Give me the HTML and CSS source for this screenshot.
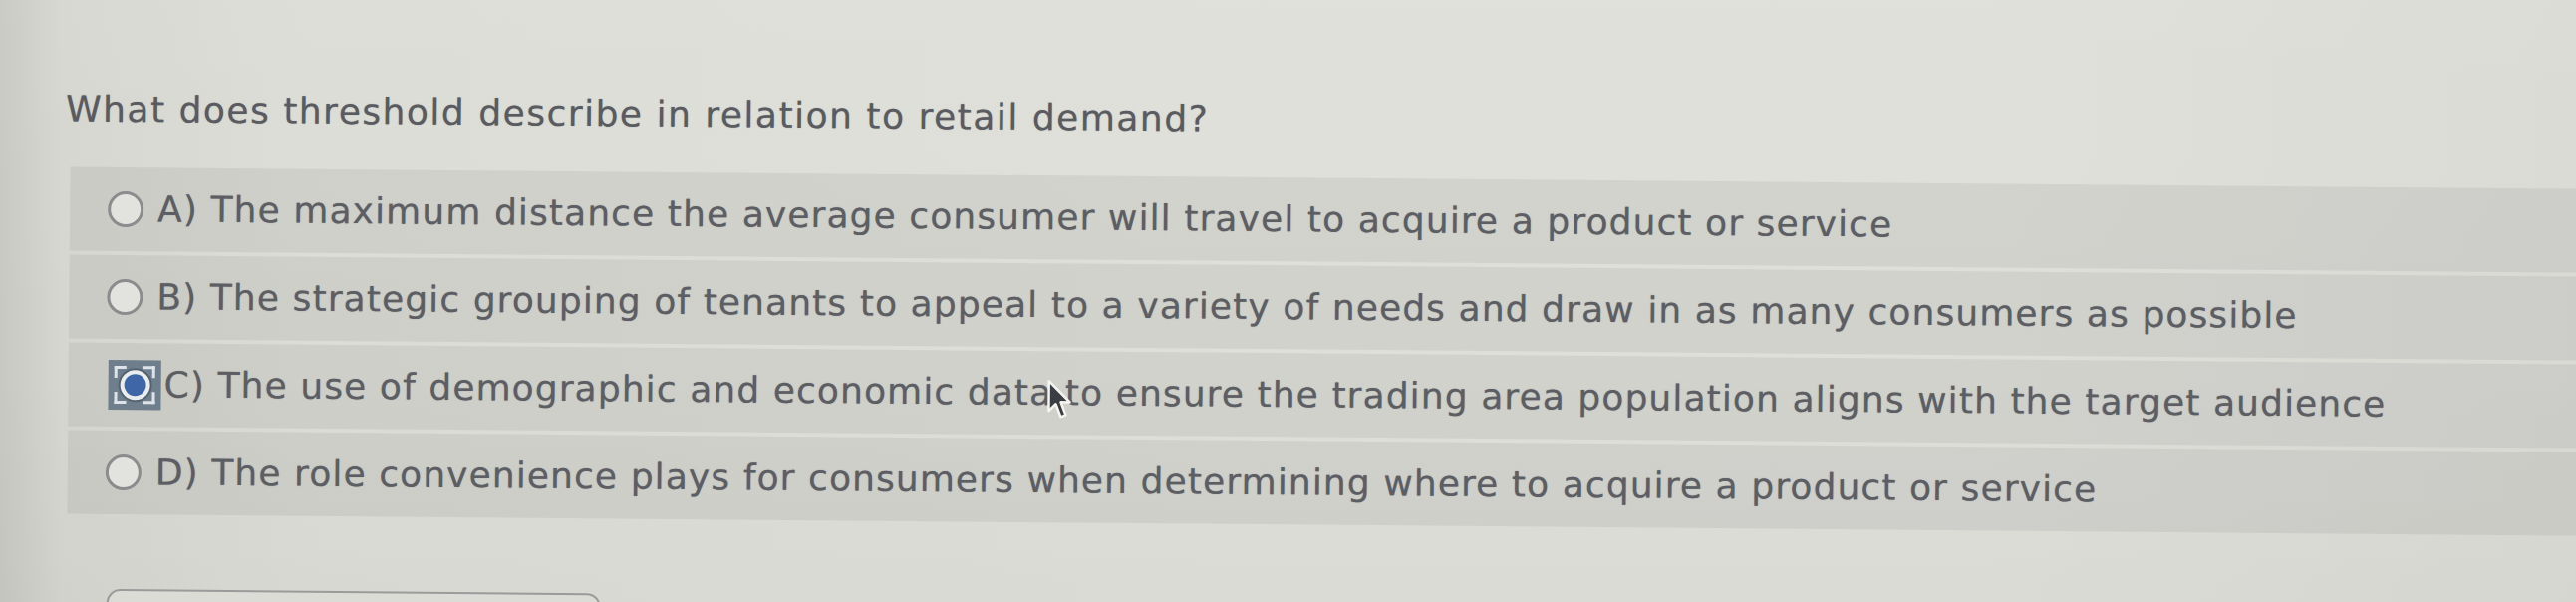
FILE: index.html
```html
<!DOCTYPE html>
<html lang="en">
<head>
<meta charset="utf-8">
<title>Question</title>
<link rel="stylesheet" href="styles.css">
</head>
<body>
<div class="page">
  <p class="question">What does threshold describe in relation to retail demand?</p>
  <ul class="options">
    <li class="option"><span class="radio"></span><span class="label">A) The maximum distance the average consumer will travel to acquire a product or service</span></li>
    <li class="option"><span class="radio"></span><span class="label">B) The strategic grouping of tenants to appeal to a variety of needs and draw in as many consumers as possible</span></li>
    <li class="option option-selected"><span class="radio-focus"><span class="corner tl"></span><span class="corner tr"></span><span class="corner bl"></span><span class="corner br"></span><span class="radio-on"></span></span><span class="label">C) The use of demographic and economic data to ensure the trading area population aligns with the target audience</span></li>
    <li class="option"><span class="radio"></span><span class="label">D) The role convenience plays for consumers when determining where to acquire a product or service</span></li>
  </ul>
  <div class="button"></div>
  <svg class="cursor" width="26" height="42" viewBox="0 0 26 42">
    <path d="M2 2 L2 32 L9 25 L14 38 L19 36 L14 23 L23 23 Z" fill="#3a3d42" stroke="#f4f4f0" stroke-width="2.5" stroke-linejoin="round"/>
  </svg>
</div>
</body>
</html>
```

FILE: styles.css
```css
html, body {
  margin: 0;
  padding: 0;
  width: 2585px;
  height: 604px;
  overflow: hidden;
}

body {
  background:
    linear-gradient(180deg, rgba(255,255,255,0.05) 0, rgba(255,255,255,0) 60%, rgba(0,0,0,0.02) 100%),
    linear-gradient(90deg, #c8c8c2 0, #d6d6d0 60px, #dcdcd6 300px, #dfdfd9 1200px, #dedfd9 2000px, #d9dad4 2585px);
  font-family: "DejaVu Sans", "Open Sans", sans-serif;
  color: #5d5e64;
}

.page {
  position: relative;
  box-sizing: border-box;
  width: 2600px;
  height: 604px;
  overflow: hidden;
  padding: 84px 0 0 67px;
  transform: rotate(0.5deg);
  transform-origin: 0 0;
}

.question {
  margin: 0;
  font-size: 36px;
  line-height: 50px;
  color: #5a5b60;
  letter-spacing: 1.5px;
  white-space: nowrap;
  text-shadow: 0 0 1px rgba(80, 80, 86, 0.6);
}

.options {
  list-style: none;
  margin: 33px 0 0 5px;
  padding: 0;
  display: flex;
  flex-direction: column;
  gap: 4px;
}

.option {
  height: 84px;
  display: flex;
  align-items: center;
  padding-left: 38px;
  background: rgba(60, 60, 50, 0.075);
  font-size: 36px;
  line-height: 50px;
}

.radio {
  width: 30px;
  height: 30px;
  border: 3px solid #8b8c8e;
  border-radius: 50%;
  background: #e2e2de;
  margin-right: 14px;
  flex: none;
}

.option-selected {
  padding-left: 40px;
}

.radio-focus {
  position: relative;
  width: 53px;
  height: 50px;
  margin-right: 3px;
  background: #6f7e8c;
  display: flex;
  align-items: center;
  justify-content: center;
  flex: none;
}

.radio-on {
  width: 22px;
  height: 22px;
  border-radius: 50%;
  background: #3f67a8;
  border: 4px solid #e9edf0;
  box-shadow: 0 0 0 2px #55636f;
}

.corner {
  position: absolute;
  width: 9px;
  height: 9px;
  border-color: #dde3e8;
  border-style: solid;
  border-width: 0;
}
.corner.tl { top: 6px; left: 6px; border-top-width: 3px; border-left-width: 3px; }
.corner.tr { top: 6px; right: 6px; border-top-width: 3px; border-right-width: 3px; }
.corner.bl { bottom: 6px; left: 6px; border-bottom-width: 3px; border-left-width: 3px; }
.corner.br { bottom: 6px; right: 6px; border-bottom-width: 3px; border-right-width: 3px; }

.label {
  white-space: nowrap;
  letter-spacing: 1.1px;
  text-shadow: 0 0 1px rgba(80, 80, 86, 0.6);
}

.button {
  margin: 75px 0 0 45px;
  width: 492px;
  height: 50px;
  border: 2px solid #9a9b9b;
  border-radius: 14px;
  background: #dcdcd7;
}

.cursor {
  position: absolute;
  left: 1054px;
  top: 371px;
}
```
